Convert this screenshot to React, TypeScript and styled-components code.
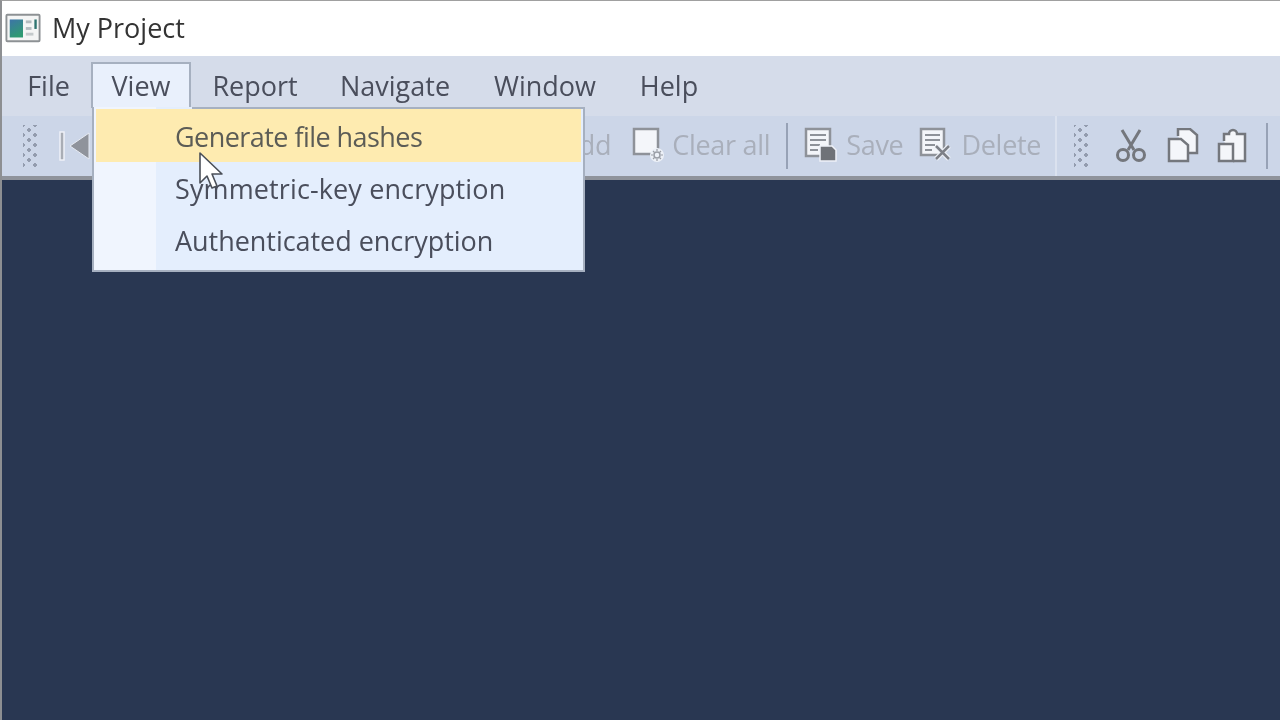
import React from 'react';
import styled, { createGlobalStyle } from 'styled-components';

const GlobalStyle = createGlobalStyle`
  html, body { margin: 0; padding: 0; height: 100%; overflow: hidden; background: #293752; }
  #root { height: 100%; }
`;

const Window = styled.div`
  position: relative;
  width: 1280px;
  height: 720px;
  display: flex;
  flex-direction: column;
  overflow: hidden;
  font-family: "Open Sans", "Noto Sans", sans-serif;
  border-left: 2px solid #8d8f92;
  border-top: 1px solid #a0a0a0;
  box-sizing: border-box;
  filter: blur(0.7px);
`;

const TitleBar = styled.div`
  height: 55px;
  flex: none;
  background: #ffffff;
  display: flex;
  align-items: center;
  padding: 0 0 2px 3px;
  box-sizing: border-box;
  gap: 11px;
  font-size: 27px;
  color: #333;
`;

const MenuBar = styled.div`
  height: 60px;
  flex: none;
  background: #d5dcea;
  display: flex;
  align-items: flex-start;
  padding-top: 6px;
  padding-left: 4px;
  box-sizing: border-box;
`;

const MenuItem = styled.div<{ $width: number; $open?: boolean }>`
  width: ${(p) => p.$width}px;
  height: 46px;
  padding-bottom: 2px;
  box-sizing: border-box;
  display: flex;
  align-items: center;
  justify-content: center;
  font-size: 27px;
  color: #4a4e5c;
  background: ${(p) => (p.$open ? '#e9f0fc' : 'transparent')};
  border: ${(p) => (p.$open ? '2px solid #a6b0c0' : '2px solid transparent')};
  border-bottom: none;
`;

const Toolbar = styled.div`
  height: 60px;
  flex: none;
  background: #ccd6e8;
  display: flex;
  align-items: center;
  padding-left: 21px;
  box-sizing: border-box;
`;

const Grip = styled.div`
  width: 14px;
  height: 42px;
  flex: none;
  background-image:
    radial-gradient(circle, #939cae 1.6px, transparent 2px),
    radial-gradient(circle, #939cae 1.6px, transparent 2px);
  background-size: 12px 10px;
  background-position: 0 0, 6px 5px;
`;

const ToolIcon = styled.svg<{ $left?: number }>`
  flex: none;
  margin-left: ${(p) => p.$left ?? 0}px;
`;

const ToolLabel = styled.span<{ $left: number }>`
  margin-left: ${(p) => p.$left}px;
  padding-bottom: 4px;
  font-size: 27px;
  letter-spacing: -0.3px;
  color: #a9afbb;
  flex: none;
`;

const Separator = styled.div<{ $left: number }>`
  width: 2px;
  height: 46px;
  flex: none;
  margin-left: ${(p) => p.$left}px;
  background: #97a2b6;
`;

const ToolEnd = styled.div<{ $left: number; $right: number }>`
  width: 2px;
  height: 60px;
  flex: none;
  margin-left: ${(p) => p.$left}px;
  margin-right: ${(p) => p.$right}px;
  background: #dbe2ef;
`;

const Workspace = styled.div`
  flex: 1;
  background: #293752;
  border-top: 4px solid #8f939b;
`;

const Dropdown = styled.div`
  position: absolute;
  left: 90px;
  top: 106px;
  width: 493px;
  height: 165px;
  box-sizing: border-box;
  background: linear-gradient(to right, #f0f5fe 0, #f0f5fe 62px, #e4eefd 62px);
  border: 2px solid #a6b0c0;
  border-top: 0;
  padding: 2px 2px 0 2px;
`;

const DropdownGap = styled.div`
  position: absolute;
  top: 0;
  left: 98px;
  right: 0;
  height: 2px;
  background: #a6b0c0;
`;

const DropdownItem = styled.div<{ $active?: boolean; $spacing?: number }>`
  height: ${(p) => (p.$active ? 53 : 52)}px;
  padding-top: ${(p) => (p.$active ? 2 : 0)}px;
  box-sizing: border-box;
  display: flex;
  align-items: center;
  padding-left: 79px;
  font-size: 27px;
  letter-spacing: ${(p) => p.$spacing ?? 0}px;
  color: ${(p) => (p.$active ? '#5c5c56' : '#4a4e5c')};
  background: ${(p) => (p.$active ? '#feebb0' : 'transparent')};
`;

const Cursor = styled.svg`
  position: absolute;
  left: 196px;
  top: 150px;
`;

const AppIcon = () => (
  <svg width="36" height="32" viewBox="0 0 38 32">
    <rect x="1.5" y="2" width="35" height="28" rx="1" fill="#f4f5f5" stroke="#8d9194" strokeWidth="2" />
    <defs>
      <linearGradient id="appIconFill" x1="0" y1="0" x2="0.4" y2="1">
        <stop offset="0" stopColor="#3d74a8" />
        <stop offset="1" stopColor="#2f9a72" />
      </linearGradient>
    </defs>
    <rect x="5" y="7" width="14" height="19" fill="url(#appIconFill)" />
    <rect x="22" y="8" width="6" height="3" fill="#b4bcc0" />
    <rect x="22" y="15" width="6" height="3" fill="#b4bcc0" />
    <rect x="22" y="21" width="8" height="3" fill="#c4cacc" />
    <rect x="31" y="7" width="2.5" height="10" fill="#2f7470" />
  </svg>
);

const FirstIcon = () => (
  <ToolIcon $left={20} width="34" height="34" viewBox="0 0 34 34">
    <rect x="3" y="3" width="4" height="28" fill="#a9adb5" stroke="#eef1f7" strokeWidth="1.5" />
    <path d="M32 4 V30 L13 17 Z" fill="#8f939b" stroke="#e6eaf2" strokeWidth="1" />
  </ToolIcon>
);

const AddIcon = () => (
  <ToolIcon $left={431} width="32" height="36" viewBox="0 0 32 36">
    <rect x="3" y="4" width="23" height="24" fill="#f5f7fb" stroke="#9a9ea6" strokeWidth="2.5" />
  </ToolIcon>
);

const ClearIcon = () => (
  <ToolIcon $left={21} width="34" height="38" viewBox="0 0 34 38">
    <rect x="2" y="2" width="24" height="25" fill="#f4f6fa" stroke="#8e9299" strokeWidth="2.5" />
    <circle cx="25" cy="28" r="7" fill="#edf1f8" />
    <circle cx="25" cy="28" r="3" fill="none" stroke="#9a9ea6" strokeWidth="1.5" />
    <path d="M25 22v2M25 32v2M19 28h2M29 28h2M21 24l1.5 1.5M27.5 30.5L29 32M21 32l1.5-1.5M27.5 25.5L29 24" stroke="#9a9ea6" strokeWidth="1.2" />
  </ToolIcon>
);

const SaveIcon = () => (
  <ToolIcon $left={16} width="34" height="38" viewBox="0 0 34 38">
    <rect x="2" y="2" width="24" height="27" fill="#f3f5f9" stroke="#8e9299" strokeWidth="2.5" />
    <path d="M6 8h16M6 13h16M6 18h10M6 23h8" stroke="#8e9299" strokeWidth="2" />
    <path d="M16 19h12l4 4v11H16z" fill="#6f7278" stroke="#eef1f7" strokeWidth="1.5" />
  </ToolIcon>
);

const DeleteIcon = () => (
  <ToolIcon $left={16} width="34" height="38" viewBox="0 0 34 38">
    <rect x="2" y="2" width="23" height="26" fill="#f3f5f9" stroke="#8e9299" strokeWidth="2.5" />
    <path d="M6 8h15M6 13h15M6 18h10M6 23h7" stroke="#8e9299" strokeWidth="2" />
    <path d="M17 19l13 13M30 19L17 32" stroke="#eef1f7" strokeWidth="5" />
    <path d="M17 19l13 13M30 19L17 32" stroke="#7d8087" strokeWidth="2.5" />
  </ToolIcon>
);

const CutIcon = () => (
  <ToolIcon $left={27} width="32" height="36" viewBox="0 0 32 36">
    <g fill="none" stroke="#74777d" strokeWidth="3">
      <path d="M7 2l12 20M25 2L13 22" />
      <circle cx="8" cy="27" r="5.5" />
      <circle cx="24" cy="27" r="5.5" />
    </g>
  </ToolIcon>
);

const CopyIcon = () => (
  <ToolIcon $left={19} width="34" height="36" viewBox="0 0 34 36">
    <path d="M12 8V1h12l7 6v18h-9" fill="#f4f6fa" stroke="#74777d" strokeWidth="2.5" />
    <path d="M3 11h12l7 6v16H3z" fill="#f4f6fa" stroke="#74777d" strokeWidth="2.5" />
  </ToolIcon>
);

const PasteIcon = () => (
  <ToolIcon $left={17} width="32" height="36" viewBox="0 0 32 36">
    <path d="M7 13V6h5a4 4 0 0 1 8 0h8v27H16" fill="#f4f6fa" stroke="#74777d" strokeWidth="2.5" />
    <rect x="2" y="16" width="14" height="17" fill="#f4f6fa" stroke="#74777d" strokeWidth="2.5" />
  </ToolIcon>
);

const App = () => {
  return (
    <Window>
      <GlobalStyle />
      <TitleBar>
        <AppIcon />
        My Project
      </TitleBar>
      <MenuBar>
        <MenuItem $width={85}>File</MenuItem>
        <MenuItem $width={100} $open>View</MenuItem>
        <MenuItem $width={128}>Report</MenuItem>
        <MenuItem $width={152}>Navigate</MenuItem>
        <MenuItem $width={148}>Window</MenuItem>
        <MenuItem $width={100}>Help</MenuItem>
      </MenuBar>
      <Toolbar>
        <Grip />
        <FirstIcon />
        <AddIcon />
        <ToolLabel $left={8}>Add</ToolLabel>
        <ClearIcon />
        <ToolLabel $left={6}>Clear all</ToolLabel>
        <Separator $left={16} />
        <SaveIcon />
        <ToolLabel $left={8}>Save</ToolLabel>
        <DeleteIcon />
        <ToolLabel $left={8}>Delete</ToolLabel>
        <ToolEnd $left={14} $right={17} />
        <Grip />
        <CutIcon />
        <CopyIcon />
        <PasteIcon />
        <Separator $left={17} />
      </Toolbar>
      <Workspace />
      <Dropdown>
        <DropdownGap />
        <DropdownItem $active $spacing={-0.55}>Generate file hashes</DropdownItem>
        <DropdownItem $spacing={0.12}>Symmetric-key encryption</DropdownItem>
        <DropdownItem $spacing={-0.04}>Authenticated encryption</DropdownItem>
      </Dropdown>
      <Cursor width="28" height="40" viewBox="0 0 28 40">
        <path d="M2 2V32L9 25L14 37L19 35L14 23H24Z" fill="#ffffff" stroke="#4a4f58" strokeWidth="1.6" strokeLinejoin="round" />
      </Cursor>
    </Window>
  );
};

export default App;
